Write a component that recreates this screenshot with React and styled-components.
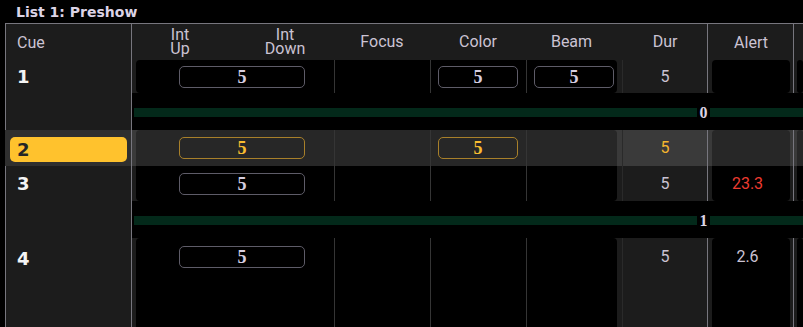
import React from "react";
import styled, { createGlobalStyle } from "styled-components";

const LINE = "#77767e";

const corners = {
    all: "4px",
    top: "4px 4px 0 0",
    bottom: "0 0 4px 4px",
};

const GlobalStyle = createGlobalStyle`
    html, body {
        margin: 0;
        padding: 0;
        background: #000;
    }
    body {
        font-family: Roboto, "Liberation Sans", sans-serif;
    }
`;

const Screen = styled.div`
    width: 803px;
    height: 327px;
    overflow: hidden;
    background: #000;
`;

const TitleBar = styled.div`
    height: 23px;
    box-sizing: border-box;
    padding: 2px 0 0 16px;
    font: bold 14px/20px "DejaVu Sans", sans-serif;
    color: #dcd4e6;
`;

const Sheet = styled.div`
    margin-left: 5px;
    border-top: 1px solid ${LINE};
`;

const Row = styled.div`
    display: flex;
    height: ${(p) => p.$h}px;
    --align: ${(p) => (p.$top ? "flex-start" : "center")};
    --pad: ${(p) => (p.$top ? "8px" : "0px")};
`;

const CueCell = styled.div`
    width: 127px;
    flex: none;
    display: flex;
    align-items: var(--align);
    padding-top: var(--pad);
    box-sizing: border-box;
    border-left: 1px solid ${(p) => (p.$selected ? "#2f2f2f" : LINE)};
    border-right: 1px solid ${LINE};
    background: ${(p) => (p.$selected ? "#2f2f2f" : "#1c1c1c")};
`;

const CueHead = styled.span`
    padding-left: 11px;
    font-size: 16px;
    color: #cbc3d3;
`;

const CueNum = styled.span`
    font: bold 18px/25px "DejaVu Sans", sans-serif;
    color: #f4f4f4;
    padding-left: 11px;
`;

const CueBadge = styled.span`
    flex: 1;
    margin: 2px 4px 0;
    height: 25px;
    padding-left: 7px;
    border-radius: 5px;
    background: #ffc22d;
    color: #262626;
    font: bold 18px/25px "DejaVu Sans", sans-serif;
`;

const Main = styled.div`
    flex: 1;
    display: flex;
    padding-left: 4px;
    background: ${(p) => (p.$selected ? "#3a3a3a" : "#1c1c1c")};
`;

const HeadBlock = styled.div`
    width: 481px;
    flex: none;
    display: grid;
    grid-template-columns: 88px 110px 96px 96px 91px;
`;

const HeadLabel = styled.div`
    display: flex;
    align-items: center;
    justify-content: center;
    text-align: center;
    padding-left: ${(p) => p.$shift || 0}px;
    font-size: 16px;
    line-height: 14px;
    color: #cbc3d3;
`;

const Block = styled.div`
    width: 481px;
    flex: none;
    display: grid;
    grid-template-columns: 198px 96px 96px 91px;
    background: ${(p) => (p.$selected ? "#272727" : "#000")};
    border-radius: ${(p) => corners[p.$round]};
`;

const Field = styled.div`
    display: flex;
    align-items: var(--align);
    padding-top: var(--pad);
    & + & {
        border-left: 1px solid #353535;
    }
`;

const ValueBox = styled.div`
    width: ${(p) => p.$w}px;
    height: 22px;
    margin-left: ${(p) => p.$offset}px;
    box-sizing: border-box;
    border: 1px solid ${(p) => (p.$selected ? "#a8802a" : "#5e5c68")};
    border-radius: 5px;
    text-align: center;
    font: bold 18px/20px "Liberation Serif", serif;
    color: ${(p) => (p.$selected ? "#f8bc30" : "#d6cee0")};
`;

const Dur = styled.div`
    width: 85px;
    flex: none;
    margin-left: 5px;
    box-sizing: border-box;
    border-left: 1px solid ${(p) => (p.$head ? "transparent" : "#2a2a2a")};
    display: flex;
    align-items: var(--align);
    padding-top: var(--pad);
    justify-content: center;
    font-size: 16px;
    line-height: 22px;
    color: ${(p) => (p.$selected ? "#f4b52e" : "#cbc3d3")};
`;

const Alert = styled.div`
    width: 86px;
    flex: none;
    box-sizing: border-box;
    border-left: 1px solid ${LINE};
    padding: 0 3px 0 4px;
    display: flex;
    justify-content: center;
    align-items: center;
    font-size: 16px;
    color: #cbc3d3;
`;

const AlertRect = styled.div`
    flex: 1;
    align-self: stretch;
    display: flex;
    justify-content: center;
    align-items: var(--align);
    padding: var(--pad) 7px 0 0;
    border-radius: ${(p) => corners[p.$round]};
    background: ${(p) => (p.$selected ? "#272727" : "#000")};
    font-size: 16px;
    line-height: 22px;
    color: ${(p) => (p.$red ? "#ee3b30" : "#cbc3d3")};
`;

const Next = styled.div`
    flex: 1;
    display: flex;
    border-left: 1px solid ${LINE};
    padding-left: 3px;
`;

const NextRect = styled.div`
    flex: 1;
    border-radius: ${(p) => corners[p.$round]};
    background: ${(p) => (p.$selected ? "#272727" : "#000")};
`;

const Gap = styled.div`
    flex: 1;
    background: #000;
    padding: 15px 0 0 2px;
`;

const Bar = styled.div`
    display: flex;
    height: 9px;
`;

const Track = styled.div`
    flex: ${(p) => (p.$w ? `0 0 ${p.$w}px` : 1)};
    background: #03291a;
`;

const Mark = styled.span`
    padding: 0 2.5px;
    background: #000;
    font: bold 16px/9px "Liberation Serif", serif;
    color: #dcd4e4;
`;

const cues = [
    { cue: "1", h: 33, round: "all", int: "5", color: "5", beam: "5", dur: "5" },
    { part: "0" },
    { cue: "2", h: 36, round: "top", selected: true, int: "5", color: "5", dur: "5" },
    { cue: "3", h: 35, round: "bottom", int: "5", dur: "5", alert: "23.3", red: true },
    { part: "1" },
    { cue: "4", h: 92, round: "top", top: true, int: "5", dur: "5", alert: "2.6" },
];

const CueRow = ({ c }) => (
    <Row $h={c.h} $top={c.top}>
        <CueCell $selected={c.selected}>
            {c.selected ? <CueBadge>{c.cue}</CueBadge> : <CueNum>{c.cue}</CueNum>}
        </CueCell>
        <Main $selected={c.selected}>
            <Block $selected={c.selected} $round={c.round}>
                <Field>
                    {c.int && (
                        <ValueBox $w={126} $offset={43} $selected={c.selected}>
                            {c.int}
                        </ValueBox>
                    )}
                </Field>
                <Field />
                <Field>
                    {c.color && (
                        <ValueBox $w={80} $offset={7} $selected={c.selected}>
                            {c.color}
                        </ValueBox>
                    )}
                </Field>
                <Field>
                    {c.beam && (
                        <ValueBox $w={80} $offset={7} $selected={c.selected}>
                            {c.beam}
                        </ValueBox>
                    )}
                </Field>
            </Block>
            <Dur $selected={c.selected}>{c.dur}</Dur>
            <Alert>
                <AlertRect $round={c.round} $selected={c.selected} $red={c.red}>
                    {c.alert}
                </AlertRect>
            </Alert>
            <Next>
                <NextRect $round={c.round} $selected={c.selected} />
            </Next>
        </Main>
    </Row>
);

const PartRow = ({ label }) => (
    <Row $h={37}>
        <CueCell />
        <Gap>
            <Bar>
                <Track />
                <Mark>{label}</Mark>
                <Track $w={93} />
            </Bar>
        </Gap>
    </Row>
);

export default function App() {
    return (
        <Screen>
            <GlobalStyle />
            <TitleBar>List 1: Preshow</TitleBar>
            <Sheet>
                <Row $h={36}>
                    <CueCell>
                        <CueHead>Cue</CueHead>
                    </CueCell>
                    <Main>
                        <HeadBlock>
                            <HeadLabel>
                                Int
                                <br />
                                Up
                            </HeadLabel>
                            <HeadLabel $shift={12}>
                                Int
                                <br />
                                Down
                            </HeadLabel>
                            <HeadLabel>Focus</HeadLabel>
                            <HeadLabel>Color</HeadLabel>
                            <HeadLabel>Beam</HeadLabel>
                        </HeadBlock>
                        <Dur $head>Dur</Dur>
                        <Alert>Alert</Alert>
                        <Next />
                    </Main>
                </Row>
                {cues.map((c, i) =>
                    c.part ? <PartRow key={i} label={c.part} /> : <CueRow key={i} c={c} />
                )}
            </Sheet>
        </Screen>
    );
}
